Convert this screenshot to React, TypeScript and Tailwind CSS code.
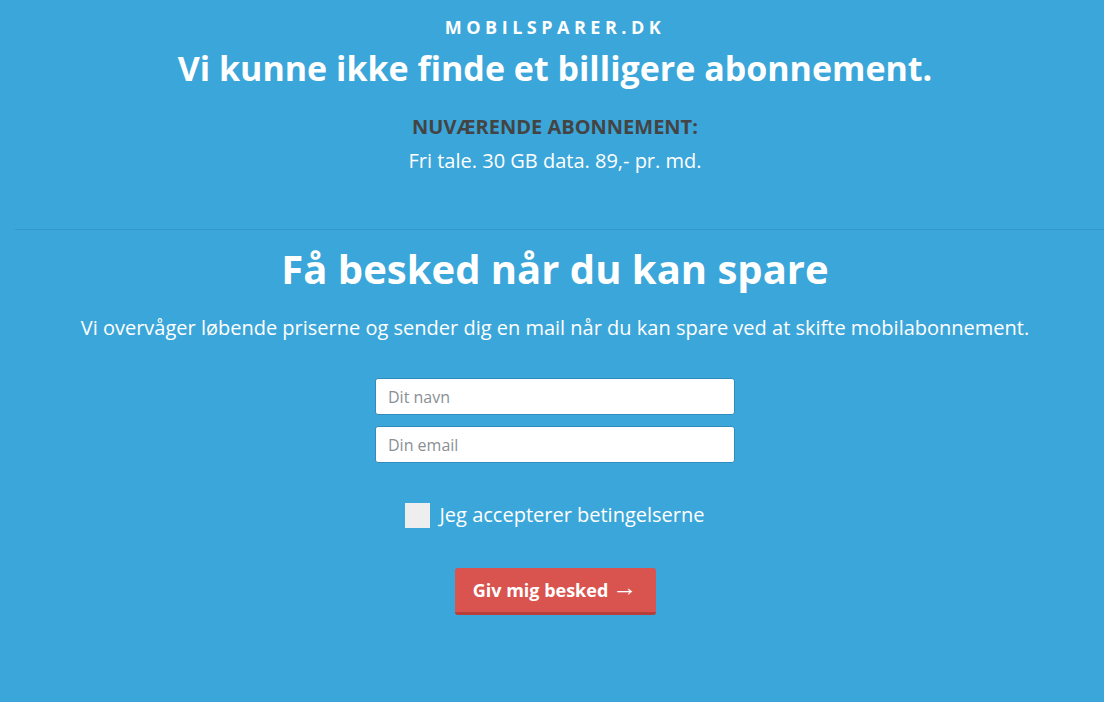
export default function App() {
  return (
    <div
      className="min-h-[702px] w-full bg-[#3ba6d9] text-white"
      style={{ fontFamily: '"Open Sans", sans-serif' }}
    >
      <div className="flex flex-col items-center pl-[6px] pt-[15px]">
        <div className="text-[18px] font-bold leading-[24px] tracking-[0.25em]">MOBILSPARER.DK</div>
        <h1 className="mt-[7px] text-[34px] font-bold leading-[44px]">
          Vi kunne ikke finde et billigere abonnement.
        </h1>
        <div className="mt-[23px] text-[20px] font-bold leading-[28px] text-[#444444]">
          NUVÆRENDE ABONNEMENT:
        </div>
        <div className="mt-[6px] text-[20px] leading-[28px]">Fri tale. 30 GB data. 89,- pr. md.</div>
      </div>

      <div className="ml-[15px] mt-[54px] border-t border-[#3497c8]" />

      <div className="flex flex-col items-center pl-[6px]">
        <h2 className="mt-[13px] text-[40px] font-bold leading-[52px]">Få besked når du kan spare</h2>
        <p className="mt-[20px] text-[20px] leading-[26px]">
          Vi overvåger løbende priserne og sender dig en mail når du kan spare ved at skifte mobilabonnement.
        </p>

        <div className="mt-[37px] flex w-[360px] flex-col gap-[11px]">
          <input
            type="text"
            placeholder="Dit navn"
            className="h-[37px] w-full rounded-[3px] border border-[#2e8cbd] bg-white px-[12px] text-[16px] text-[#333] placeholder:text-[#8a8f96] outline-none"
          />
          <input
            type="text"
            placeholder="Din email"
            className="h-[37px] w-full rounded-[3px] border border-[#2e8cbd] bg-white px-[12px] text-[16px] text-[#333] placeholder:text-[#8a8f96] outline-none"
          />
        </div>

        <label className="mt-[39px] flex items-center gap-[9px]">
          <span className="block h-[25px] w-[25px] bg-[#eeeeee]" />
          <span className="text-[20px] leading-[26px]">Jeg accepterer betingelserne</span>
        </label>

        <button className="mt-[40px] flex h-[47px] w-[201px] items-center justify-center gap-[4px] rounded-[3px] border-b-[3px] border-[#b73e3a] bg-[#d9534f] text-[18px] font-bold text-white">
          <span>Giv mig besked</span>
          <span
            className="-translate-y-[3px] text-[25px] font-normal leading-[20px]"
            style={{ fontFamily: '"Liberation Sans", sans-serif' }}
          >
            →
          </span>
        </button>
      </div>
    </div>
  );
}
